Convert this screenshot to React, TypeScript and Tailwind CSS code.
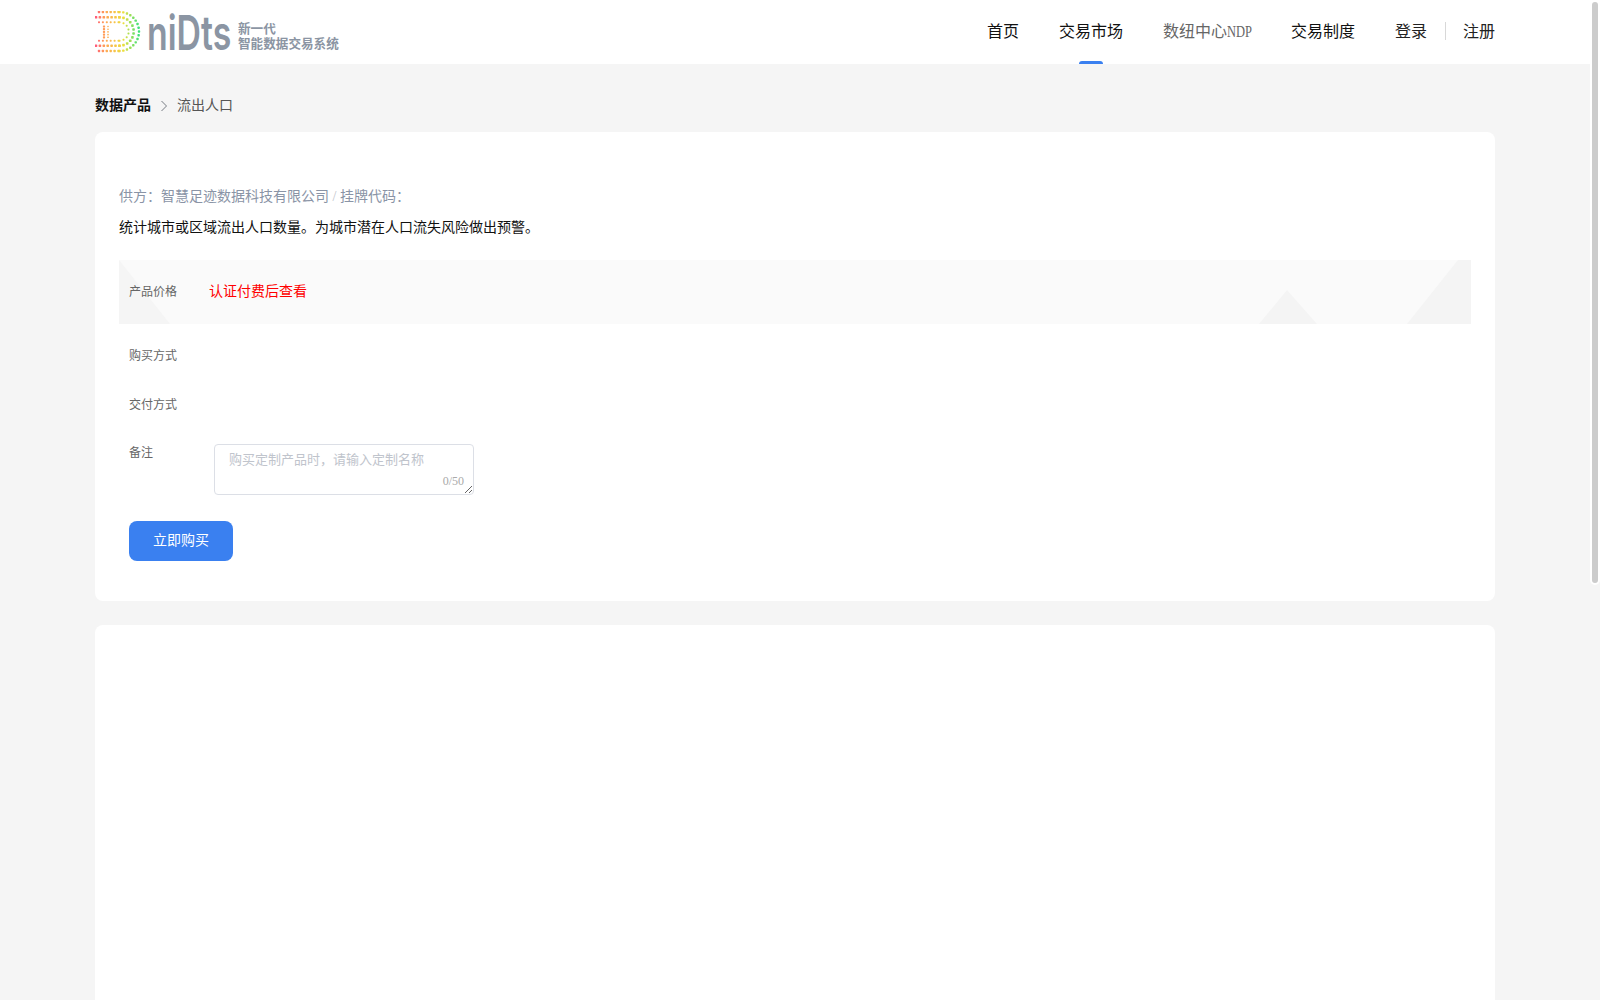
const serif = "font-['Liberation_Serif','Noto_Sans_CJK_SC',serif]";

const navItems = [
  { label: "首页", color: "text-[#111]" },
  { label: "交易市场", color: "text-[#111]", active: true },
  { label: "数纽中心", suffix: "NDP", color: "text-[#666]" },
  { label: "交易制度", color: "text-[#111]" },
];

const lerp = (a: number[], b: number[], t: number) =>
  a.map((v, i) => Math.round(v + (b[i] - v) * t));

const dotColor = (x: number) => {
  const stops = [
    { x: 0, c: [255, 85, 125] },
    { x: 10, c: [255, 165, 85] },
    { x: 28, c: [238, 222, 60] },
    { x: 44, c: [60, 225, 120] },
  ];
  for (let i = 0; i < stops.length - 1; i++) {
    if (x <= stops[i + 1].x) {
      const t = Math.max(0, (x - stops[i].x) / (stops[i + 1].x - stops[i].x));
      const [r, g, b] = lerp(stops[i].c, stops[i + 1].c, t);
      return `rgb(${r},${g},${b})`;
    }
  }
  return "rgb(60,225,120)";
};

// dotted D mark: three concentric rings plus the short inner bars
const ringDots = () => {
  const cx = 24.5;
  const cy = 20;
  const rings = [
    { r: 19.5, start: 4, size: 2.4 },
    { r: 14.2, start: 1, size: 2.6 },
    { r: 9.2, start: 4, size: 2 },
  ];
  const dots: { x: number; y: number; s: number }[] = [];
  rings.forEach(({ r, start, size }) => {
    for (let x = start; x < cx; x += 3.9) {
      dots.push({ x, y: cy - r, s: size });
      dots.push({ x, y: cy + r, s: size });
    }
    const steps = Math.round((Math.PI * r) / 3.9);
    for (let i = 0; i <= steps; i++) {
      const a = -Math.PI / 2 + (Math.PI * i) / steps;
      dots.push({ x: cx + r * Math.cos(a), y: cy + r * Math.sin(a), s: size });
    }
  });
  for (let y = 15; y <= 26; y += 2.7) {
    dots.push({ x: 9, y, s: 2.2 });
    dots.push({ x: 13, y, s: 1.6 });
  }
  return dots;
};

const LogoMark = () => (
  <svg width="46" height="42" viewBox="0 0 46 42" className="shrink-0">
    {ringDots().map((d, i) => (
      <rect
        key={i}
        x={d.x - d.s / 2}
        y={d.y - d.s / 2 + 0.5}
        width={d.s}
        height={d.s}
        rx={0.7}
        fill={dotColor(d.x)}
      />
    ))}
  </svg>
);

const Logo = () => (
  <div className="flex items-center">
    <LogoMark />
    <svg
      width="86"
      height="44"
      viewBox="0 0 122 44"
      preserveAspectRatio="none"
      className="ml-[5px] shrink-0"
    >
      <text
        x="1.5"
        y="40"
        className="font-['Inter',sans-serif] text-[48px] font-semibold fill-[#8b95a3]"
      >
        niDts
      </text>
    </svg>
    <div className="ml-[6px] font-['Noto_Sans_CJK_SC',sans-serif] text-[12.6px] leading-[15px] font-bold text-[#8b95a3] mt-[5px]">
      <div>新一代</div>
      <div>智能数据交易系统</div>
    </div>
  </div>
);

const Header = () => (
  <header className="h-16 bg-white">
    <div className="w-[1400px] h-full mx-auto flex items-center justify-between">
      <Logo />
      <nav className="h-full flex items-center text-base">
        {navItems.map((item) => (
          <a
            key={item.label}
            className={`relative h-full flex items-center mr-10 ${item.color}`}
          >
            {item.label}
            {item.suffix && (
              <span className="inline-block w-6 origin-left scale-x-[.78]">{item.suffix}</span>
            )}
            {item.active && (
              <span className="absolute bottom-0 left-1/2 -translate-x-1/2 w-6 h-[3px] rounded-t-sm bg-[#3a80f0]" />
            )}
          </a>
        ))}
        <a className="text-[#222]">登录</a>
        <span className="w-px h-[18px] bg-[#d8d8d8] ml-[18px] mr-[17px] mt-[-3px]" />
        <a className="text-[#222]">注册</a>
      </nav>
    </div>
  </header>
);

const Breadcrumb = () => (
  <div className="h-[68px] flex items-center pt-4 text-sm">
    <span className="font-bold text-[#111]">数据产品</span>
    <svg width="8" height="12" viewBox="0 0 8 12" className="mx-[9px]" fill="none">
      <path d="M1.5 1 6.5 6 1.5 11" stroke="#777c84" strokeWidth="1" />
    </svg>
    <span className="text-[#555]">流出人口</span>
  </div>
);

const FieldRow = ({ label, className }: { label: string; className: string }) => (
  <div className={`flex items-center px-[10px] text-xs text-[#666] ${className}`}>
    {label}
  </div>
);

const ProductCard = () => (
  <section className="bg-white rounded-lg px-6 pt-[55px] pb-10">
    <p className="text-sm leading-5 text-[#8a94a6]">
      供方：智慧足迹数据科技有限公司 <span className="text-[#c0c4cc]">/</span> 挂牌代码：
    </p>
    <p className="mt-[11px] text-sm leading-5 text-[#111]">
      统计城市或区域流出人口数量。为城市潜在人口流失风险做出预警。
    </p>

    <div className="relative mt-[22px] h-16 bg-[#fafafa] flex items-center px-[10px] overflow-hidden">
      <svg className="absolute inset-0 w-full h-full" viewBox="0 0 1352 64" preserveAspectRatio="none">
        <polygon points="0,0 51,64 0,64" fill="#f5f5f5" />
        <polygon points="1168,30 1140,64 1198,64" fill="#f4f4f4" />
        <polygon points="1339,0 1288,64 1352,64 1352,0" fill="#f4f4f4" />
      </svg>
      <span className="relative w-[80px] text-xs text-[#666]">产品价格</span>
      <span className="relative text-sm text-[#f00]">认证付费后查看</span>
    </div>

    <FieldRow label="购买方式" className="h-[49px] mt-[7px]" />
    <FieldRow label="交付方式" className="h-[49px]" />

    <div className="flex items-start mt-[15px] px-[10px]">
      <span className="w-[85px] mt-px text-xs leading-[17px] text-[#666]">备注</span>
      <div className="relative w-[260px] h-[51px]">
        <textarea
          placeholder="购买定制产品时，请输入定制名称"
          className="block w-full h-full px-[14px] py-[5px] text-[13px] leading-[20px] border border-[#dcdfe6] rounded-[4px] outline-none resize-y placeholder:text-[#c0c4cc]"
        />
        <span className={`absolute right-[10px] bottom-[8px] text-xs leading-none text-[#aaa] ${serif}`}>
          0/50
        </span>
      </div>
    </div>

    <button className="block ml-[10px] mt-[26px] w-[104px] h-10 rounded-lg bg-[#3a80f0] text-sm text-white">
      立即购买
    </button>
  </section>
);

// the browser hides native scrollbars in the photo, so the bar is drawn beside the page
const ScrollBar = () => (
  <aside className="w-[10px] shrink-0 bg-[#f5f5f5]">
    <div className="h-[585px] bg-white rounded-b-[5px] p-[2px]">
      <div className="h-full rounded-[3px] bg-[#cccccc]" />
    </div>
  </aside>
);

export default function App() {
  return (
    <div className={`flex h-screen overflow-hidden bg-[#f5f5f5] ${serif}`}>
      <div className="flex-1 min-w-0">
        <Header />
        <main className="w-[1400px] mx-auto pb-6">
          <Breadcrumb />
          <ProductCard />
          <section className="mt-6 h-[1063px] bg-white rounded-lg" />
        </main>
      </div>
      <ScrollBar />
    </div>
  );
}
